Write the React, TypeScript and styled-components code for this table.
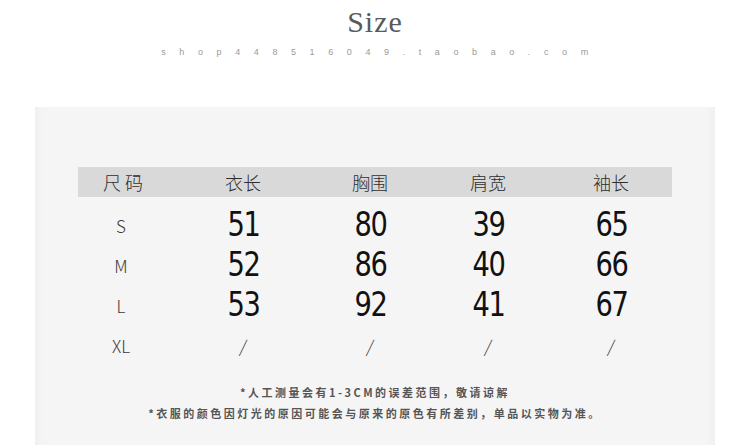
import styled, { createGlobalStyle } from "styled-components";

const GlobalStyle = createGlobalStyle`
  html, body {
    margin: 0;
    padding: 0;
    background: #ffffff;
  }
`;

const columns = "90px 150px 104px 132px 114px";

const headers = ["尺 码", "衣长", "胸围", "肩宽", "袖长"];

const rows = [
  { size: "S", values: ["51", "80", "39", "65"] },
  { size: "M", values: ["52", "86", "40", "66"] },
  { size: "L", values: ["53", "92", "41", "67"] },
  { size: "XL", values: ["/", "/", "/", "/"] },
];

const notes = [
  "*人工测量会有1-3CM的误差范围，敬请谅解",
  "*衣服的颜色因灯光的原因可能会与原来的原色有所差别，单品以实物为准。",
];

const App = () => {
  return (
    <>
      <GlobalStyle />
      <Page>
        <Heading>
          <Title>Size</Title>
          <Shop>shop448516049.taobao.com</Shop>
        </Heading>
        <Panel>
          <HeaderBand>
            {headers.map((h) => (
              <HeadCell key={h}>{h}</HeadCell>
            ))}
          </HeaderBand>
          <Body>
            {rows.map((row) => (
              <Row key={row.size}>
                <SizeCell>{row.size}</SizeCell>
                {row.values.map((v, i) =>
                  v === "/" ? (
                    <SlashCell key={i}>/</SlashCell>
                  ) : (
                    <NumCell key={i}>{v}</NumCell>
                  )
                )}
              </Row>
            ))}
          </Body>
          <Notes>
            {notes.map((n) => (
              <Note key={n}>{n}</Note>
            ))}
          </Notes>
        </Panel>
      </Page>
    </>
  );
};

export default App;

const Page = styled.div`
  width: 750px;
  height: 445px;
  overflow: hidden;
  display: flex;
  flex-direction: column;
  align-items: center;
`;

const Heading = styled.div`
  display: flex;
  flex-direction: column;
  align-items: center;
  padding-top: 4px;
  height: 103px;
  box-sizing: border-box;
`;

const Title = styled.div`
  font-family: "Liberation Serif", serif;
  font-size: 30px;
  line-height: 36px;
  color: #5a5a5a;
  letter-spacing: 1px;
`;

const Shop = styled.div`
  margin-top: 6px;
  font-family: "Liberation Sans", sans-serif;
  font-size: 9px;
  line-height: 12px;
  color: #9a9a9a;
  letter-spacing: 13.6px;
  padding-left: 13px;
`;

const Panel = styled.div`
  width: 680px;
  flex: 1;
  margin-top: 4px;
  background: #f5f5f5;
  box-shadow: inset 6px 0 6px -4px #ededed, inset -6px 0 6px -4px #ededed;
  padding-top: 60px;
  box-sizing: border-box;
  display: flex;
  flex-direction: column;
`;

const HeaderBand = styled.div`
  margin-left: 43px;
  width: 594px;
  height: 30px;
  background: #d9d9d9;
  display: grid;
  grid-template-columns: ${columns};
  align-items: center;
  justify-items: center;
`;

const HeadCell = styled.div`
  font-family: "Noto Sans CJK SC", sans-serif;
  font-weight: 300;
  font-size: 18px;
  line-height: 30px;
  color: #2e2e2e;
`;

const Body = styled.div`
  margin-left: 43px;
  width: 594px;
  padding-top: 8px;
`;

const Row = styled.div`
  display: grid;
  grid-template-columns: ${columns};
  height: 40px;
  align-items: center;
  justify-items: center;
`;

const SizeCell = styled.div`
  font-family: "Noto Sans CJK SC", sans-serif;
  font-weight: 300;
  font-size: 17px;
  color: #3a3a3a;
  margin-left: -4px;
`;

const NumCell = styled.div`
  font-family: "DejaVu Sans Condensed", sans-serif;
  font-size: 33px;
  line-height: 40px;
  letter-spacing: -1.5px;
  color: #111111;
  transform: scaleX(0.92);
`;

const SlashCell = styled.div`
  font-family: "Noto Sans CJK SC", sans-serif;
  font-weight: 300;
  font-size: 17px;
  color: #333333;
  transform: skewX(-8deg);
`;

const Notes = styled.div`
  margin-top: 17px;
  display: flex;
  flex-direction: column;
  align-items: center;
`;

const Note = styled.div`
  font-family: "Noto Sans CJK SC", sans-serif;
  font-weight: 700;
  font-size: 11px;
  line-height: 21px;
  letter-spacing: 2.5px;
  color: #555555;
`;
